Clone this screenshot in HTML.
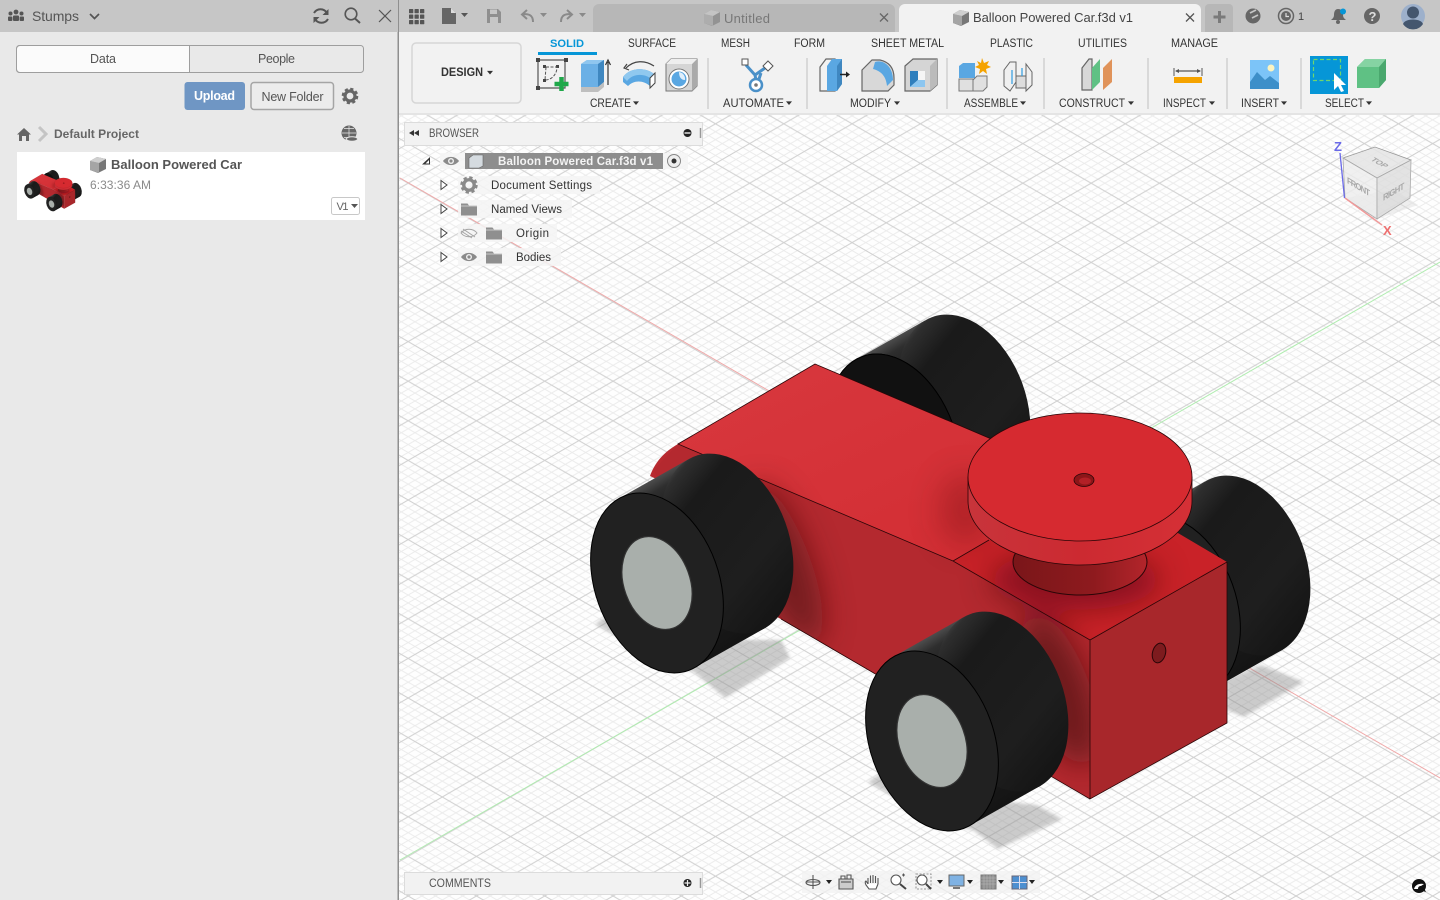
<!DOCTYPE html>
<html lang="en"><head><meta charset="utf-8"><title>Balloon Powered Car</title>
<style>
html,body{margin:0;padding:0;width:1440px;height:900px;overflow:hidden;background:#fff}
svg{display:block;position:absolute;left:0;top:0}
text{font-family:"Liberation Sans",sans-serif;font-size:12px;fill:#444}
.r{font-size:11.5px;fill:#333}
</style></head><body>
<svg width="1440" height="900" viewBox="0 0 1440 900" xmlns="http://www.w3.org/2000/svg">
<defs>
<pattern id="grid" patternUnits="userSpaceOnUse" width="100" height="100" patternTransform="translate(442.3 599) scale(.683 .396)">
<path d="M20 0L100 80M0 80L20 100M40 0L100 60M0 60L40 100M60 0L100 40M0 40L60 100M80 0L100 20M0 20L80 100M80 0L0 80M100 80L80 100M60 0L0 60M100 60L60 100M40 0L0 40M100 40L40 100M20 0L0 20M100 20L20 100" stroke="#ebebeb" stroke-width="2" fill="none"/>
<path d="M0 0L100 100M0 100L100 0" stroke="#d0d0d0" stroke-width="2.1" fill="none"/>
</pattern>
<linearGradient id="tread" gradientUnits="userSpaceOnUse" x1="-47.6" y1="-78.800" x2="47.6" y2="78.800">
<stop offset="0" stop-color="#505050"/><stop offset=".07" stop-color="#2e2e2e"/><stop offset=".22" stop-color="#1a1a1a"/><stop offset=".7" stop-color="#1e1e1e"/><stop offset="1" stop-color="#141414"/>
</linearGradient>
<linearGradient id="puckside" x1="0" x2="1" y1="0" y2="0"><stop offset="0" stop-color="#c8343b"/><stop offset=".5" stop-color="#cc2a31"/><stop offset="1" stop-color="#d53036"/></linearGradient>
<linearGradient id="stem" x1="0" x2="1" y1="0" y2="0"><stop offset="0" stop-color="#7a1619"/><stop offset=".6" stop-color="#8e1a1e"/><stop offset="1" stop-color="#b3252b"/></linearGradient>
<linearGradient id="top1" x1="0" x2="1" y1="0" y2="1"><stop offset="0" stop-color="#d8383e"/><stop offset="1" stop-color="#d22c32"/></linearGradient>
<filter id="b12" x="-60%" y="-60%" width="220%" height="220%"><feGaussianBlur stdDeviation="15"/></filter>
<filter id="b2" x="-10%" y="-10%" width="120%" height="120%"><feGaussianBlur stdDeviation="1.5"/></filter>
<clipPath id="bodyclip"><path d="M815 364L678 444L654 470L700 572L1090 799L1090 640L1227 562L1090 481Z"/></clipPath>
<g id="wheel">
<path d="M-39 -84L31 -123.500L109 44.500L39 84Z" fill="url(#tread)"/>
<ellipse cx="70" cy="-39.500" rx="62" ry="93" transform="rotate(-20 70 -39.500)" fill="url(#tread)"/>
<ellipse rx="62" ry="93" transform="rotate(-20)" fill="#212121" stroke="#000" stroke-width="1"/>
</g>
<g id="car">
<use href="#wheel" x="894" y="444"/>
<ellipse cx="894" cy="444" rx="62" ry="93" transform="rotate(-20 894 444)" fill="#111" stroke="#000"/>
<use href="#wheel" x="1174" y="605"/>
<path d="M678 444C664 452 655 462 650 476L700 500Z" fill="#b82a30"/>
<path d="M678 444L953 561L1090 640L1090 799L700 572L654 470Z" fill="#b4292f"/>
<path d="M815 364L678 444L953 561L1090 481Z" fill="url(#top1)"/>
<path d="M1090 481L953 561L1090 640L1227 562Z" fill="#c92228"/>
<g clip-path="url(#bodyclip)">
<g filter="url(#b12)">
<ellipse cx="785" cy="565" rx="26" ry="85" transform="rotate(-20 785 565)" fill="#4a0b0d" opacity=".6"/>
<ellipse cx="1060" cy="690" rx="30" ry="80" transform="rotate(-20 1060 690)" fill="#4a0b0d" opacity=".65"/>
<ellipse cx="1075" cy="580" rx="85" ry="30" fill="#4a0b0d" opacity=".5"/>
<ellipse cx="965" cy="510" rx="26" ry="36" fill="#4a0b0d" opacity=".25"/>
</g>
</g>
<path d="M1090 640L1227 562L1227 723L1090 799Z" fill="#a8272b"/>
<path d="M815 364L678 444L953 561L1090 640L1227 562M815 364L1090 481M953 561L989 540M1090 640V799L1227 723V562" fill="none" stroke="#2a0507" stroke-width=".8"/>
<path d="M1090 799L781 619" fill="none" stroke="#2a0507" stroke-width=".8"/>
<ellipse cx="1159" cy="653" rx="6.500" ry="10" transform="rotate(15 1159 653)" fill="#7d1b1e" stroke="#2a0507"/>
<ellipse cx="1080" cy="562" rx="67" ry="33" fill="url(#stem)" stroke="#2a0507"/>
<path d="M968 477V501A112 64 0 0 0 1192 501V477Z" fill="url(#puckside)" stroke="#2a0507" stroke-width=".8"/>
<ellipse cx="1080" cy="477" rx="112" ry="64" fill="#d62a30" stroke="#2a0507" stroke-width=".8"/>
<ellipse cx="1084" cy="480" rx="10" ry="6.500" fill="#8c1518" stroke="#2a0507" stroke-width=".8"/>
<ellipse cx="1085" cy="481" rx="6" ry="3.500" fill="#b22026"/>
<use href="#wheel" x="657" y="583"/>
<ellipse cx="657" cy="583" rx="33" ry="48" transform="rotate(-20 657 583)" fill="#a9afab" stroke="#333" stroke-width="1.200"/>
<use href="#wheel" x="932" y="741"/>
<ellipse cx="932" cy="741" rx="33" ry="48" transform="rotate(-20 932 741)" fill="#a9afab" stroke="#333" stroke-width="1.200"/>
</g>
<g id="folder"><path d="M0 1.500H6.500L8 3.500H16V13.500H0Z" fill="#8f8f8f"/><path d="M0 4H16" stroke="#fff" stroke-width=".5"/></g>
<g id="eye"><path d="M-8 0C-4 -5.500 4 -5.500 8 0C4 5.500 -4 5.500 -8 0Z" fill="#8a8a8a"/><circle r="3" fill="#f0f0f0"/><circle r="1.600" fill="#8a8a8a"/></g>
<g id="gear"><circle r="5" fill="none" stroke="#666" stroke-width="3.200"/><circle r="7" fill="none" stroke="#666" stroke-width="2.600" stroke-dasharray="3.100 2.400"/></g>
<g id="cubeic"><path d="M0 4L7 0L16 2V12L8 16L0 13Z" fill="#777"/><path d="M0 4L9 6V16L0 13Z" fill="#a5a5a5"/><path d="M0 4L7 0L16 2L9 6Z" fill="#cfcfcf"/></g>
<path id="caret" d="M-3 -1.600H3L0 2Z" fill="#333"/>
</defs>

<!-- viewport -->
<rect x="399" y="0" width="1041" height="900" fill="#fefefe"/>
<rect x="399" y="0" width="1041" height="900" fill="url(#grid)"/>
<path d="M400 178L1440 778" stroke="#f0a9a9" stroke-width="1"/>
<path d="M400 860L1440 262" stroke="#b0ecb0" stroke-width="1"/>

<!-- shadows -->
<g fill="#8f8f8f" opacity=".45" filter="url(#b2)">
<path d="M610 614L595 624L667 665L694 672L725 698L790 658L781 640L720 640Z"/>
<path d="M883 772L868 782L938 823L973 830L998 849L1062 819L1037 805L990 800Z"/>
<path d="M1261 665L1304 682L1244 717L1227 710L1227 680Z"/>
</g>
<use href="#car"/>

<!-- left panel -->
<rect x="0" y="0" width="398" height="900" fill="#e9e9e9"/>
<rect x="397.500" y="0" width="1.500" height="900" fill="#8f8f8f"/>
<rect x="0" y="0" width="398" height="32" fill="#c6c6c6"/>
<g fill="#555"><circle cx="16" cy="12" r="2.400"/><circle cx="10.500" cy="13.500" r="2"/><circle cx="21.500" cy="13.500" r="2"/><rect x="13" y="15.500" width="6" height="5.500" rx="1"/><rect x="8" y="16.500" width="4.400" height="4.500" rx="1"/><rect x="19.600" y="16.500" width="4.400" height="4.500" rx="1"/></g>
<text x="32" y="21" style="font-size:14px;fill:#555" textLength="47">Stumps</text>
<path d="M90 14L94.500 18.500L99 14" fill="none" stroke="#555" stroke-width="1.700"/>
<g fill="none" stroke="#555" stroke-width="2"><path d="M314 13A7.500 7.500 0 0 1 327 13"/><path d="M328 19A7.500 7.500 0 0 1 315 19"/></g>
<path d="M328.500 9V15H322.500ZM313.500 23V17H319.500Z" fill="#555"/>
<circle cx="351" cy="14" r="5.800" fill="none" stroke="#555" stroke-width="1.600"/><path d="M355 18.500L360 23" stroke="#555" stroke-width="2"/>
<path d="M379 10L391 22M391 10L379 22" stroke="#555" stroke-width="1.200"/>

<rect x="16.500" y="45.500" width="347" height="27" rx="3" fill="#e9e9e9" stroke="#9e9e9e"/>
<path d="M189.500 45.500H20a3.500 3.500 0 0 0-3.500 3.500V69a3.500 3.500 0 0 0 3.500 3.500H189.500Z" fill="#fbfbfb" stroke="#9e9e9e"/>
<text x="90" y="63" style="font-size:12.500px;fill:#555" textLength="26">Data</text>
<text x="258" y="63" style="font-size:12.500px;fill:#555" textLength="37">People</text>
<rect x="184.500" y="82" width="60.500" height="28" rx="3" fill="#6f96c4"/>
<text x="194" y="100" style="font-size:12.500px;font-weight:bold;fill:#fff" textLength="41">Upload</text>
<rect x="251" y="82.500" width="82.500" height="27" rx="3" fill="#ececec" stroke="#a5a5a5" stroke-width="1.500"/>
<text x="261.500" y="101" style="font-size:12.500px;fill:#555" textLength="62">New Folder</text>
<use href="#gear" x="350" y="96"/>
<path d="M17 134.500L24 128L31 134.500H29V141H26V136H22V141H19V134.500Z" fill="#666"/>
<path d="M39 127L46 134L39 141" fill="none" stroke="#c4c4c4" stroke-width="3"/>
<text x="54" y="138" style="font-size:12px;font-weight:bold;fill:#666" textLength="85">Default Project</text>
<circle cx="349" cy="133" r="7.500" fill="#666"/><path d="M342 133H356M349 126V140M344 128.500H354M344 137.500H354" stroke="#e9e9e9" stroke-width=".7"/>
<path d="M346 139C348 136 356 136 358 139C356 142 348 142 346 139Z" fill="#666" stroke="#e9e9e9"/>
<rect x="17" y="152" width="348" height="68" fill="#fff"/>
<use href="#car" transform="translate(-23 144.800) scale(.08)"/>
<use href="#cubeic" transform="translate(90 157)"/>
<text x="111" y="169" style="font-size:13px;font-weight:bold;fill:#555" textLength="131">Balloon Powered Car</text>
<text x="90" y="189" style="font-size:12px;fill:#8a8a8a" textLength="61">6:33:36 AM</text>
<rect x="331.500" y="197.500" width="28" height="17" rx="2" fill="#fff" stroke="#c8c8c8"/>
<text x="336.500" y="210" style="font-size:11px;fill:#666" textLength="12">V1</text>
<path d="M351 204H358L354.500 208Z" fill="#555"/>

<!-- top bar -->
<rect x="399" y="0" width="1041" height="32" fill="#c6c6c6"/>
<rect x="399" y="32" width="1041" height="82" fill="#f2f2f2"/>
<rect x="399" y="113" width="1041" height="2" fill="#e4e4e4"/>
<g fill="#555"><rect x="409" y="9" width="4.300" height="4.300" rx=".7"/><rect x="414.500" y="9" width="4.300" height="4.300" rx=".7"/><rect x="420" y="9" width="4.300" height="4.300" rx=".7"/><rect x="409" y="14.500" width="4.300" height="4.300" rx=".7"/><rect x="414.500" y="14.500" width="4.300" height="4.300" rx=".7"/><rect x="420" y="14.500" width="4.300" height="4.300" rx=".7"/><rect x="409" y="20" width="4.300" height="4.300" rx=".7"/><rect x="414.500" y="20" width="4.300" height="4.300" rx=".7"/><rect x="420" y="20" width="4.300" height="4.300" rx=".7"/></g>
<path d="M442 8H451L456 13V24H442Z" fill="#666"/><path d="M451 8L456 13H451Z" fill="#ddd"/>
<path d="M461 13H468L464.500 17Z" fill="#555"/>
<path d="M487 9H498L501 12V23H487Z" fill="#8f8f8f"/><rect x="490" y="9.500" width="7" height="4.500" fill="#c6c6c6"/><rect x="490" y="17" width="8" height="6" fill="#c6c6c6"/>
<path d="M533 22C533 15 529 14 523 14M527 10L522 14.500L527 19" fill="none" stroke="#8a8a8a" stroke-width="2"/>
<path d="M540 13H547L543.500 17Z" fill="#8a8a8a"/>
<path d="M561 22C561 15 565 14 571 14M567 10L572 14.500L567 19" fill="none" stroke="#8a8a8a" stroke-width="2"/>
<path d="M579 13H586L582.500 17Z" fill="#8a8a8a"/>
<path d="M593 32V10a6 6 0 0 1 6-6H889a6 6 0 0 1 6 6V32Z" fill="#b7b7b7"/>
<g opacity=".55"><use href="#cubeic" transform="translate(704 10)"/></g>
<text x="724" y="23" style="font-size:13px;fill:#777" textLength="46">Untitled</text>
<path d="M880 13.500L888 21.500M888 13.500L880 21.500" stroke="#666" stroke-width="1.300"/>
<path d="M899 32V10a6 6 0 0 1 6-6H1195a6 6 0 0 1 6 6V32Z" fill="#f2f2f2"/>
<use href="#cubeic" transform="translate(953 10)"/>
<text x="973" y="22" style="font-size:13px;fill:#444" textLength="160">Balloon Powered Car.f3d v1</text>
<path d="M1186 13.500L1194 21.500M1194 13.500L1186 21.500" stroke="#555" stroke-width="1.300"/>
<path d="M1205 32V8a4 4 0 0 1 4-4H1229a4 4 0 0 1 4 4V32Z" fill="#b7b7b7"/>
<path d="M1219.500 11V23M1213.500 17H1225.500" stroke="#7a7a7a" stroke-width="3"/>
<circle cx="1253" cy="16" r="7.500" fill="#666"/><path d="M1250 13L1256 10M1252 18L1258 15" stroke="#c6c6c6" stroke-width="1.800"/>
<circle cx="1286" cy="16" r="7.500" fill="none" stroke="#666" stroke-width="1.500"/><circle cx="1286" cy="16" r="5" fill="#666"/><path d="M1286 13V16.500H1289" fill="none" stroke="#ddd" stroke-width="1.200"/>
<text x="1298" y="20" style="font-size:11px;fill:#444">1</text>
<path d="M1338 9C1342 9 1343 12 1343 15C1343 18 1345 19 1346 20H1331C1332 19 1334 18 1334 15C1334 12 1335 9 1338 9Z" fill="#666"/><circle cx="1338" cy="22" r="2" fill="#666"/>
<circle cx="1343" cy="11.500" r="3" fill="#0696d7"/>
<circle cx="1372" cy="16" r="8" fill="#666"/>
<text x="1368.500" y="21" style="font-size:13px;font-weight:bold;fill:#ddd">?</text>
<circle cx="1413" cy="16" r="12" fill="#9db0cb"/>
<circle cx="1413" cy="12.500" r="6" fill="#44566e"/><path d="M1403 24C1405 18 1421 18 1423 24A12 12 0 0 1 1403 24Z" fill="#44566e"/>

<!-- ribbon tabs -->
<text x="550" y="47" style="font-size:11px;font-weight:bold;fill:#0696d7" textLength="34" lengthAdjust="spacingAndGlyphs">SOLID</text>
<rect x="538" y="52" width="59" height="3" fill="#0696d7"/>
<text class="r" x="628" y="47" textLength="48" lengthAdjust="spacingAndGlyphs">SURFACE</text>
<text class="r" x="721" y="47" textLength="29" lengthAdjust="spacingAndGlyphs">MESH</text>
<text class="r" x="794" y="47" textLength="31" lengthAdjust="spacingAndGlyphs">FORM</text>
<text class="r" x="871" y="47" textLength="73" lengthAdjust="spacingAndGlyphs">SHEET METAL</text>
<text class="r" x="990" y="47" textLength="43" lengthAdjust="spacingAndGlyphs">PLASTIC</text>
<text class="r" x="1078" y="47" textLength="49" lengthAdjust="spacingAndGlyphs">UTILITIES</text>
<text class="r" x="1171" y="47" textLength="47" lengthAdjust="spacingAndGlyphs">MANAGE</text>
<rect x="412" y="43" width="109" height="60" rx="4" fill="#f2f2f2" stroke="#d6d6d6" stroke-width="1.500"/>
<text x="441" y="76" style="font-size:11.500px;font-weight:bold;fill:#333" textLength="42" lengthAdjust="spacingAndGlyphs">DESIGN</text>
<use href="#caret" x="490" y="72.500"/>

<!-- group labels -->
<text class="r" x="590" y="107" textLength="41" lengthAdjust="spacingAndGlyphs">CREATE</text><use href="#caret" x="636" y="103"/>
<text class="r" x="723" y="107" textLength="61" lengthAdjust="spacingAndGlyphs">AUTOMATE</text><use href="#caret" x="789" y="103"/>
<text class="r" x="850" y="107" textLength="41" lengthAdjust="spacingAndGlyphs">MODIFY</text><use href="#caret" x="897" y="103"/>
<text class="r" x="964" y="107" textLength="54" lengthAdjust="spacingAndGlyphs">ASSEMBLE</text><use href="#caret" x="1023" y="103"/>
<text class="r" x="1059" y="107" textLength="66" lengthAdjust="spacingAndGlyphs">CONSTRUCT</text><use href="#caret" x="1131" y="103"/>
<text class="r" x="1163" y="107" textLength="43" lengthAdjust="spacingAndGlyphs">INSPECT</text><use href="#caret" x="1212" y="103"/>
<text class="r" x="1241" y="107" textLength="38" lengthAdjust="spacingAndGlyphs">INSERT</text><use href="#caret" x="1284" y="103"/>
<text class="r" x="1325" y="107" textLength="39" lengthAdjust="spacingAndGlyphs">SELECT</text><use href="#caret" x="1369" y="103"/>
<g fill="#d9d9d9"><rect x="707" y="58" width="2" height="51"/><rect x="806" y="58" width="2" height="51"/><rect x="946" y="58" width="2" height="51"/><rect x="1043" y="58" width="2" height="51"/><rect x="1147" y="58" width="2" height="51"/><rect x="1226" y="58" width="2" height="51"/><rect x="1300" y="58" width="2" height="51"/></g>

<!-- sketch -->
<path d="M538 60H565V88H538Z" fill="none" stroke="#555" stroke-width="1.200"/>
<g fill="#444"><rect x="536" y="58" width="4" height="4"/><rect x="564" y="58" width="4" height="4"/><rect x="536" y="86" width="4" height="4"/><rect x="543" y="65" width="3" height="3"/><rect x="556" y="65" width="3" height="3"/><rect x="543" y="79" width="3" height="3"/></g>
<path d="M546 67H557C557 74 552 80 545 80Z" fill="none" stroke="#555" stroke-width="1" stroke-dasharray="3 1.500"/>
<path d="M561.500 77V91M554.500 84H568.500" stroke="#1fa84a" stroke-width="4.500"/>
<!-- extrude -->
<path d="M581 64L587 60H604V82L598 87H581Z" fill="#6bb0e6"/><path d="M581 64L587 60H604L598 64Z" fill="#8fc6ef"/><path d="M598 64L604 60V82L598 87Z" fill="#3f87c0"/>
<path d="M581 87H598L604 82V87L598 92H581Z" fill="#bfbfbf"/>
<path d="M608 85V62M605.500 65L608 60L610.500 65" fill="none" stroke="#333" stroke-width="1.200"/>
<!-- revolve -->
<path d="M626 68C634 60 645 60 654 66M627 64L624 68L629 70" fill="none" stroke="#444" stroke-width="1.200"/>
<path d="M623 77C630 67 646 67 654 74L650 86C643 80 634 80 628 86L623 82Z" fill="#5aa7e2"/><path d="M623 77C630 67 646 67 654 74L650 78C643 73 632 74 627 81Z" fill="#90c8ef"/>
<path d="M650 78L655 73V83L650 88Z" fill="#fff" stroke="#444"/>
<!-- hole -->
<path d="M666 64L671 59H697V86L692 91H666Z" fill="#d5d5d5" stroke="#777"/><path d="M692 64L697 59V86L692 91Z" fill="#aaa"/><path d="M666 64L671 59H697L692 64Z" fill="#eee"/>
<circle cx="679" cy="79" r="10" fill="#fff" stroke="#777"/><circle cx="679" cy="79" r="7.500" fill="#5aa7e2"/><path d="M679 72A7 7 0 0 1 685 80C681 80 679 77 679 72Z" fill="#dfeefb"/>
<!-- automate -->
<path d="M746 65L755 75L765 68M755 75L757 85L761 73" fill="none" stroke="#4a90c8" stroke-width="3"/>
<rect x="742" y="59" width="6" height="6" fill="#fff" stroke="#555"/>
<path d="M768 61L773 66L768 71L763 66Z" fill="#fff" stroke="#555"/>
<circle cx="756" cy="85" r="6" fill="#fff" stroke="#4a90c8" stroke-width="2.500"/><circle cx="756" cy="85" r="1.800" fill="#777"/>
<!-- press pull -->
<path d="M820 67L826 59H835V91H820Z" fill="#f2f2f2" stroke="#666" stroke-width="1.200"/>
<path d="M827 66L832 59H842V84L837 91H827Z" fill="#5aa7e2"/><path d="M837 66L842 59V84L837 91Z" fill="#3f87c0"/>
<path d="M840 74.500H848" stroke="#222" stroke-width="1.500"/><path d="M846 71.500L850 74.500L846 77.500Z" fill="#222"/>
<!-- fillet -->
<path d="M862 70L872 60H880C889 62 894 68 894 78V85L888 91H862Z" fill="#d8d8d8" stroke="#666" stroke-width="1.200"/>
<path d="M875 62C884 59 893 67 893 80L887 86C886 76 881 71 873 69Z" fill="#5aa7e2"/>
<!-- shell -->
<path d="M905 66L913 59H937V85L930 91H905Z" fill="#d5d5d5" stroke="#666" stroke-width="1.200"/>
<path d="M930 66L937 59V85L930 91Z" fill="#bbb"/>
<rect x="910" y="71" width="15" height="16" fill="#f5f5f5"/><path d="M910 71H918V80L910 87Z" fill="#2f7fbd"/><path d="M910 87L918 80H925V87Z" fill="#8cc6f0"/>
<!-- assemble -->
<path d="M959 66L963 63H975V78H959Z" fill="#5aa7e2"/><rect x="959" y="79" width="14" height="12" fill="#e0e0e0" stroke="#777"/>
<path d="M973 91V80L977 76H987V87L983 91Z" fill="#e0e0e0" stroke="#777"/>
<path d="M982 58L984 63L989 61L987 65L991 67L986 69L987 74L983 71L979 74L980 69L975 67L979 65L977 61L981 63Z" fill="#f5a300"/>
<path d="M1004 70L1010 62H1016V82L1010 91L1004 86Z" fill="#f0f0f0" stroke="#666"/><path d="M1032 72L1026 64V91L1032 85Z" fill="#f0f0f0" stroke="#666"/><path d="M1016 76H1026V88H1016Z" fill="#ddd" stroke="#666"/>
<path d="M1012 70V84M1022 68V76" stroke="#2f9be0" stroke-width="1.200"/>
<!-- construct -->
<path d="M1082 68L1089 59H1092V90H1082Z" fill="#d8d8d8" stroke="#666" stroke-width="1.200"/>
<path d="M1092 68L1100 59V82L1092 90Z" fill="#5fc184"/>
<path d="M1103 68L1112 59V82L1103 90Z" fill="#e0935a"/>
<!-- inspect -->
<path d="M1174 68V76M1202 68V76" stroke="#555" stroke-width="1"/><path d="M1176 71H1200" stroke="#555" stroke-width="1.200"/><path d="M1175 71L1179 69V73ZM1201 71L1197 69V73Z" fill="#555"/>
<rect x="1174" y="77" width="28" height="6" fill="#f5a300"/>
<!-- insert -->
<rect x="1250" y="60" width="29" height="29" fill="#7cc4f8"/>
<path d="M1250 82L1257 72L1265 80L1270 76L1279 83V89H1250Z" fill="#3d8fc9"/>
<circle cx="1271" cy="68" r="3.500" fill="#fbf3c0"/>
<!-- select -->
<rect x="1310" y="56" width="38" height="38" fill="#0696d7"/>
<rect x="1313.500" y="59.500" width="27" height="21" fill="none" stroke="#6fd66f" stroke-dasharray="4 2.500" stroke-width="1.200"/>
<path d="M1334 73V90L1338 86L1341 92L1344 91L1341 85H1346Z" fill="#fff"/>
<path d="M1357 67L1365 59H1386V80L1379 88H1357Z" fill="#5fc184"/><path d="M1357 67L1365 59H1386L1379 67Z" fill="#86d3a3"/><path d="M1379 67L1386 59V80L1379 88Z" fill="#4aa86e"/>

<!-- browser -->
<rect x="404.500" y="122.500" width="298" height="23" fill="#f2f2f2" stroke="#dcdcdc"/>
<path d="M409 133L414 130V136ZM414 133L419 130V136Z" fill="#333"/>
<text x="429" y="137" style="font-size:11.500px;fill:#555" textLength="50" lengthAdjust="spacingAndGlyphs">BROWSER</text>
<circle cx="687.500" cy="133" r="4" fill="#222"/><rect x="684.500" y="132.300" width="6" height="1.400" fill="#eee"/>
<path d="M700.500 128V138" stroke="#999" stroke-width="1.500"/>
<g fill="#f4f4f4" fill-opacity=".85">
<rect x="440" y="153" width="248" height="16"/><rect x="458" y="176" width="142" height="18"/><rect x="458" y="200" width="114" height="18"/><rect x="458" y="224" width="99" height="18"/><rect x="458" y="248" width="103" height="18"/>
</g>
<path d="M422 164.500L430 157V164.500Z" fill="#333"/><path d="M425.500 163.500L429 160V163.500Z" fill="#fff"/>
<use href="#eye" x="451" y="161"/>
<rect x="465" y="153" width="198" height="16" fill="#8e8e8e"/>
<path d="M469 158L473 155H483V166L479 168H469Z" fill="#d5dbe0" stroke="#666" stroke-width=".6"/>
<text x="498" y="165" style="font-size:11.500px;font-weight:bold;fill:#f4f4f4" textLength="155">Balloon Powered Car.f3d v1</text>
<circle cx="674" cy="161" r="6.500" fill="#eee" stroke="#888"/><circle cx="674" cy="161" r="2.500" fill="#333"/>
<g fill="#fff" stroke="#444" stroke-width="1"><path d="M441 180.500L447 185L441 189.500Z"/><path d="M441 204.500L447 209L441 213.500Z"/><path d="M441 228.500L447 233L441 237.500Z"/><path d="M441 252.500L447 257L441 261.500Z"/></g>
<g transform="translate(469 185) scale(1.050)"><use href="#gear" opacity=".75"/></g>
<text x="491" y="189" style="font-size:11.500px;fill:#333" textLength="101">Document Settings</text>
<use href="#folder" transform="translate(461 202)"/>
<text x="491" y="213" style="font-size:11.500px;fill:#333" textLength="71">Named Views</text>
<g opacity=".75"><path d="M461 233C465 228 473 228 477 233C473 238 465 238 461 233Z" fill="none" stroke="#888"/><path d="M463 229L475 237M461 231L472 238" stroke="#888"/></g>
<use href="#folder" transform="translate(486 226)"/>
<text x="516" y="237" style="font-size:11.500px;fill:#333" textLength="33">Origin</text>
<use href="#eye" x="469" y="257"/>
<use href="#folder" transform="translate(486 250)"/>
<text x="516" y="261" style="font-size:11.500px;fill:#333" textLength="35">Bodies</text>

<!-- comments -->
<rect x="404.500" y="872.500" width="298" height="22" fill="#f2f2f2" stroke="#dcdcdc"/>
<text x="429" y="887" style="font-size:11.500px;fill:#555" textLength="62" lengthAdjust="spacingAndGlyphs">COMMENTS</text>
<circle cx="687.500" cy="883" r="4" fill="#222"/><path d="M684.500 883H690.500M687.500 880V886" stroke="#eee" stroke-width="1.200"/>
<path d="M700.500 878V888" stroke="#999" stroke-width="1.500"/>

<!-- viewcube -->
<path d="M1345 198L1377 219L1418 205L1395 190Z" fill="#ddd" opacity=".5"/>
<path d="M1343 158L1375 147L1411 160L1377 178Z" fill="#e4e4e4" fill-opacity=".85" stroke="#999" stroke-width=".8"/>
<path d="M1343 158L1377 178V219L1345 198Z" fill="#ececec" fill-opacity=".8" stroke="#aaa" stroke-width=".8"/>
<path d="M1377 178L1411 160L1410 198L1377 219Z" fill="#dcdcdc" fill-opacity=".8" stroke="#aaa" stroke-width=".8"/>
<text transform="matrix(.85 .5 0 1 1347 183)" style="font-size:9px;font-weight:bold;fill:#a8a8a8" textLength="27">FRONT</text>
<text transform="matrix(.85 -.5 0 1 1383 201)" style="font-size:9px;font-weight:bold;fill:#a8a8a8" textLength="25">RIGHT</text>
<text transform="matrix(.8 .45 -.75 .45 1370 160)" style="font-size:9px;font-weight:bold;fill:#a8a8a8">TOP</text>
<path d="M1344.500 198L1340 153" stroke="#6a6ae8" stroke-width="1.300"/>
<path d="M1345 198L1382 225" stroke="#f09a9a" stroke-width="1.500"/>
<text x="1334" y="151" style="font-size:13px;font-weight:bold;fill:#6a6ae8">Z</text>
<text x="1383" y="235" style="font-size:13px;font-weight:bold;fill:#ee7070">X</text>

<!-- nav bar -->
<rect x="802" y="871" width="238" height="22" fill="#f2f2f2" fill-opacity=".75"/>
<g fill="none" stroke="#555" stroke-width="1.100">
<path d="M813 875V889M806 882H820"/><ellipse cx="813" cy="882.500" rx="7" ry="3"/>
<path d="M839 879H853V889H839Z" fill="#ccc"/><path d="M841 879V876H845V879M847 879V875H851V879"/><path d="M841 882H851"/>
<path d="M868 884V878M870.500 883V875.500M873 883V875M875.500 883V876M878 884V878M868 884L866 881C865 881 865 883 866 885L869 889H876L878 884" fill="#fff"/>
<circle cx="896" cy="880" r="5" fill="#fff"/><path d="M900 884L906 889" stroke-width="2" stroke="#444"/><path d="M902 875H905M903.500 873.500V876.500"/>
<rect x="916" y="874" width="15" height="15" stroke-dasharray="2 1.500" stroke="#999"/><circle cx="922" cy="880" r="5" fill="#fff"/><path d="M926 884L931 889" stroke-width="2" stroke="#444"/>
</g>
<rect x="949" y="875" width="15" height="11" fill="#7fb2e3" stroke="#666"/><rect x="953" y="887" width="7" height="2" fill="#777"/>
<rect x="981" y="875" width="15" height="14" fill="#8f8f8f" stroke="#777"/><path d="M984 875V889M987 875V889M990 875V889M993 875V889M981 878H996M981 881H996M981 884H996" stroke="#bbb" stroke-width=".5"/>
<rect x="1012" y="876" width="15" height="13" fill="#4d8fd0" stroke="#667"/><path d="M1019.500 876V889M1012 882.500H1027" stroke="#dde" stroke-width="1"/>
<path d="M826 880H832L829 884ZM937 880H943L940 884ZM967 880H973L970 884ZM998 880H1004L1001 884ZM1029 880H1035L1032 884Z" fill="#222"/>

<circle cx="1419" cy="886" r="7" fill="#111"/><path d="M1414 889C1415 885 1419 883 1424 884L1421 886C1419 886 1418 887 1418 889Z" fill="#fff"/><path d="M1423 891L1426 892L1424 888Z" fill="#111"/>
</svg>
</body></html>
